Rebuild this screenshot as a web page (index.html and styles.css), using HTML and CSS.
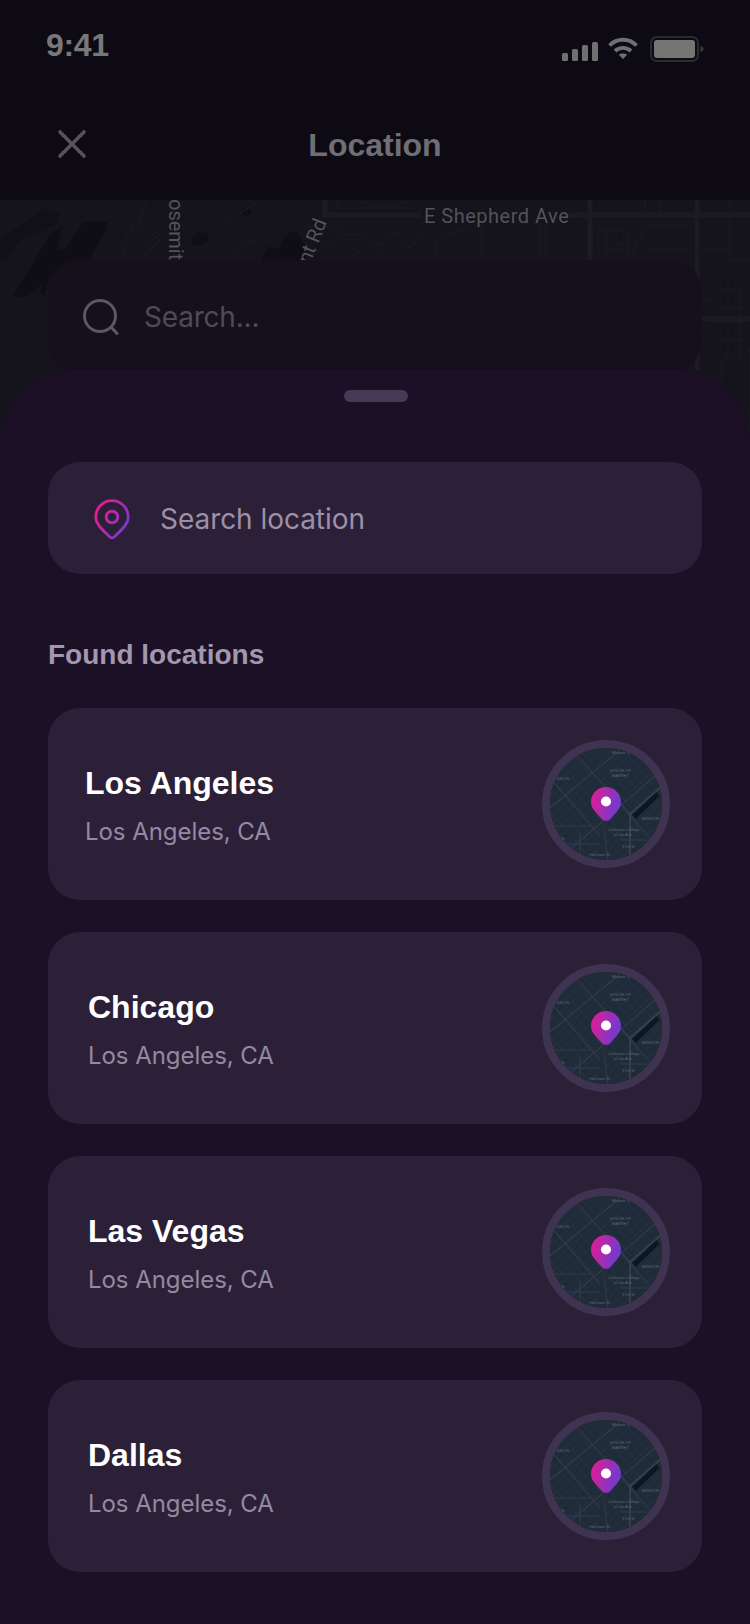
FILE: index.html
```html
<!DOCTYPE html>
<html lang="en">
<head>
<meta charset="utf-8">
<title>Location</title>
<link rel="stylesheet" href="styles.css">
</head>
<body>
<svg class="defs" width="0" height="0" aria-hidden="true">
  <defs>
    <linearGradient id="brand" x1="0" y1="0" x2="1" y2="0.35">
      <stop offset="0" stop-color="#ec1a8c"/>
      <stop offset="1" stop-color="#6f3bd0"/>
    </linearGradient>
    <linearGradient id="brand-line" gradientUnits="userSpaceOnUse" x1="2" y1="8" x2="34" y2="24">
      <stop offset="0" stop-color="#ec1a8c"/>
      <stop offset="1" stop-color="#7c38cc"/>
    </linearGradient>
    <pattern id="grid" width="8" height="7" patternUnits="userSpaceOnUse" patternTransform="rotate(-42 56 56)">
      <path d="M0 0H8M0 0V7" fill="none" stroke="#2a3745" stroke-width="0.700"/>
    </pattern>
    <symbol id="thumb" viewBox="0 0 112 112">
      <rect width="112" height="112" fill="#1f2b39"/>
      <rect width="112" height="112" fill="url(#grid)"/>
      <path d="M0 28L44 -6M-2 62L70 2M8 112L112 22M20 0L84 70M0 30L50 88M56 40L100 90" fill="none" stroke="#303d4b" stroke-width="1.100"/>
      <path d="M80 112V66L112 38" fill="none" stroke="#3a4652" stroke-width="1.600"/>
      <path d="M84 69L108 46" fill="none" stroke="#0d1720" stroke-width="5"/>
      <path d="M30 84V112M54 80L58 112M70 92H112M0 78H40M12 96H50" fill="none" stroke="#303d4b" stroke-width="1"/>
      <g class="thumb-label">
        <text x="60" y="24">SOUTH OF</text>
        <text x="62" y="29">MARKET</text>
        <text x="58" y="83">California College</text>
        <text x="64" y="88">of the Arts</text>
        <text x="62" y="6">Mission St</text>
        <text x="92" y="72">MISSION</text>
        <text x="2" y="32">MISSION</text>
        <text x="72" y="100">17th St</text>
        <text x="40" y="108">Harrison St</text>
        <text x="2" y="92">15th St</text>
      </g>
    </symbol>
    <symbol id="pin" viewBox="0 0 30 34">
      <path d="M15 0C6.7 0 0 6.7 0 15c0 6.2 5 10.800 11 17.300 2.200 2.200 5.800 2.200 8 0C25 25.800 30 21.200 30 15 30 6.700 23.300 0 15 0z" fill="url(#brand)"/>
      <circle cx="15" cy="14.500" r="5" fill="#fff"/>
    </symbol>
  </defs>
</svg>

<header class="top">
  <div class="status">
    <span class="time">9:41</span>
    <div class="status-icons">
      <svg class="signal" width="36" height="20" viewBox="0 0 36 20">
        <rect x="0" y="11" width="6" height="8" rx="1.500"/>
        <rect x="10" y="7" width="6" height="12" rx="1.500"/>
        <rect x="20" y="3" width="6" height="16" rx="1.500"/>
        <rect x="30" y="0" width="6" height="19" rx="1.500"/>
      </svg>
      <svg class="wifi" width="30" height="22" viewBox="0 0 30 22">
        <path d="M1.500 8.500C9 .8 21 .8 28.500 8.500" fill="none" stroke-width="3.800"/>
        <path d="M7 14C11.500 9.800 18.500 9.800 23 14" fill="none" stroke-width="3.800"/>
        <path d="M10.800 17.800C13 16 17 16 19.200 17.800L15 22z" class="wifi-dot"/>
      </svg>
      <svg class="battery" width="54" height="26" viewBox="0 0 54 26">
        <rect x="1" y="1" width="47" height="24" rx="5.500" fill="none" stroke="#2b2a30" stroke-width="2"/>
        <rect x="4" y="4" width="41" height="18" rx="3" fill="#747674"/>
        <path d="M50.500 10c2 .5 3 1.500 3 3s-1 2.500-3 3z" fill="#3a393f"/>
      </svg>
    </div>
  </div>
  <nav class="nav">
    <button class="close" type="button" aria-label="Close">
      <svg width="30" height="30" viewBox="0 0 30 30"><path d="M3 3L27 27M27 3L3 27" fill="none" stroke="#55525c" stroke-width="3.600" stroke-linecap="round"/></svg>
    </button>
    <h1 class="title">Location</h1>
    <span class="nav-spacer"></span>
  </nav>
</header>

<section class="map">
  <svg class="map-art" width="750" height="250" viewBox="0 0 750 250">
    <rect width="750" height="250" fill="#15131b"/>
    <g fill="#100e15">
      <path d="M83 22H108L106 32L88 60L60 65L48 80L45 97L40 93L43 83L27 97L12 97L20 85L50 35L63 25L57 50L65 50Z"/>
      <ellipse cx="200" cy="39" rx="9" ry="6" transform="rotate(-25 200 39)"/>
      <ellipse cx="246" cy="12" rx="5" ry="4"/>
      <path d="M262 60L268 46L278 50L284 36L296 30L304 44L306 60Z"/>
    </g>
    <path d="M0 40L45 8L60 15L55 25L20 40L8 60L0 58Z" fill="#121017"/>
    <g class="thin">
      <path d="M126 58C122 44 128 32 136 22M140 58L160 40L138 24L146 0M165 30L140 50"/>
      <path d="M230 60C232 50 240 44 256 40M258 0C250 10 232 14 222 28"/>
      <path d="M310 56L340 36C360 30 372 42 380 46L396 32L410 48L430 28M345 60L370 46L395 60M300 30C310 20 330 28 345 30"/>
      <path d="M338 0V8H420M360 0C370 8 400 8 410 0"/>
      <path d="M436 60V40L470 26H482V58M482 40H558M510 24H540V60M546 26V60M566 60H600"/>
      <path d="M598 30H624V50H598ZM606 30V60M612 44H624M630 60L638 40L648 26H690V60M648 40H688M648 50H688M628 60V30M660 0V14M645 0V14M697 50H730V60H750M730 0V60H750M697 16V60"/>
      <path d="M716 90H740V160H728M728 80V160M716 108H744M716 122H744M716 140H744M702 100H716M702 230H750V150L740 160H722V180H702M702 210H750M740 160V135"/>
    </g>
    <g class="roads">
      <path d="M325 0V15H421M569 15H750"/>
      <path d="M590 0V60M697 0V170M702 119H750"/>
    </g>
    <g class="map-label">
      <text x="424" y="23" class="street">E Shepherd Ave</text>
      <text transform="translate(169 -1) rotate(90)">osemit</text>
      <text transform="translate(327 22) rotate(-68)" text-anchor="end">nt Rd</text>
    </g>
  </svg>
  <div class="map-search">
    <svg width="36" height="36" viewBox="0 0 36 36"><circle cx="17" cy="17" r="15.500" fill="none" stroke="#5a5862" stroke-width="3"/><path d="M28 28L34 34.500" fill="none" stroke="#5a5862" stroke-width="3" stroke-linecap="round"/></svg>
    <span class="map-search-text">Search...</span>
  </div>
</section>

<main class="sheet">
  <div class="handle"></div>
  <div class="field">
    <svg width="36" height="41" viewBox="0 0 36 41">
      <path d="M18 1.700C9 1.700 1.700 9 1.700 18c0 6.800 6 12 13.800 19.800 1.400 1.400 3.600 1.400 5 0C28.300 30 34.300 24.800 34.300 18 34.300 9 27 1.700 18 1.700z" fill="none" stroke="url(#brand-line)" stroke-width="2.800"/>
      <circle cx="18" cy="18" r="5.800" fill="none" stroke="url(#brand-line)" stroke-width="3"/>
    </svg>
    <span class="field-text">Search location</span>
  </div>
  <h2 class="section-title">Found locations</h2>
  <ul class="list">
    <li class="card card-first">
      <div class="card-text"><span class="city">Los Angeles</span><span class="region">Los Angeles, CA</span></div>
      <div class="thumb"><svg class="thumb-map" width="112" height="112"><use href="#thumb"/></svg><svg class="thumb-pin" width="30" height="34"><use href="#pin"/></svg></div>
    </li>
    <li class="card">
      <div class="card-text"><span class="city">Chicago</span><span class="region">Los Angeles, CA</span></div>
      <div class="thumb"><svg class="thumb-map" width="112" height="112"><use href="#thumb"/></svg><svg class="thumb-pin" width="30" height="34"><use href="#pin"/></svg></div>
    </li>
    <li class="card">
      <div class="card-text"><span class="city">Las Vegas</span><span class="region">Los Angeles, CA</span></div>
      <div class="thumb"><svg class="thumb-map" width="112" height="112"><use href="#thumb"/></svg><svg class="thumb-pin" width="30" height="34"><use href="#pin"/></svg></div>
    </li>
    <li class="card">
      <div class="card-text"><span class="city">Dallas</span><span class="region">Los Angeles, CA</span></div>
      <div class="thumb"><svg class="thumb-map" width="112" height="112"><use href="#thumb"/></svg><svg class="thumb-pin" width="30" height="34"><use href="#pin"/></svg></div>
    </li>
  </ul>
</main>
</body>
</html>
```
FILE: styles.css
```css
* { box-sizing: border-box; }
html, body { margin: 0; padding: 0; }
body {
  width: 750px;
  height: 1624px;
  overflow: hidden;
  background: #1c1026;
  font-family: "Liberation Sans", Arial, sans-serif;
}
.defs { position: absolute; }

.top { height: 200px; background: #0d0a14; display: flex; flex-direction: column; }
.status {
  height: 88px;
  padding: 27px 46px 0 46px;
  display: flex;
  justify-content: space-between;
  align-items: flex-start;
}
.time { font-size: 32px; line-height: 36px; font-weight: 700; color: #787878; letter-spacing: -0.3px; }
.status-icons { display: flex; align-items: flex-start; gap: 10px; padding-top: 9px; }
.signal { margin-top: 6px; fill: #707070; }
.wifi { margin-top: 1px; margin-right: 2px; stroke: #707070; }
.wifi-dot { fill: #707070; stroke: none; }

.nav {
  height: 112px;
  padding: 0 48px;
  display: grid;
  grid-template-columns: 48px 1fr 48px;
  align-items: center;
}
.close { width: 48px; height: 48px; padding: 0 0 0 9px; border: 0; background: none; display: flex; align-items: center; }
.title { margin: 2px 0 0; text-align: center; font-size: 32px; line-height: 40px; font-weight: 700; color: #6f6e75; }

.map { position: relative; height: 250px; padding: 60px 48px 0; overflow: hidden; }
.map-art { position: absolute; left: 0; top: 0; }
.thin { fill: none; stroke: #1a1820; stroke-width: 1.500; }
.roads { fill: none; stroke: #1c1a22; stroke-width: 5; }
.map-label text { font-family: Roboto, sans-serif; font-size: 20px; fill: #54525a; }
.map-label .street { letter-spacing: 0.5px; }
.map-search {
  position: relative;
  height: 112px;
  border-radius: 32px;
  background: #15101b;
  padding: 2px 0 0 35px;
  display: flex;
  align-items: center;
  gap: 25px;
}
.map-search-text { font-family: Inter, sans-serif; font-size: 28px; color: #4e4b55; letter-spacing: -0.2px; }

.sheet {
  position: relative;
  margin-top: -80px;
  height: 1254px;
  padding: 20px 48px 0;
  background: #1c1026;
  border-radius: 72px 72px 0 0;
}
.handle { width: 64px; height: 12px; margin-left: 296px; border-radius: 6px; background: #453a55; }
.field {
  height: 112px;
  margin-top: 60px;
  border-radius: 32px;
  background: #2c2038;
  padding: 2px 0 0 46px;
  display: flex;
  align-items: center;
  gap: 30px;
}
.field-text { font-family: Inter, sans-serif; font-size: 28px; color: #9c90a8; letter-spacing: -0.05px; }
.section-title { margin: 65px 0 37px; font-size: 28px; line-height: 32px; font-weight: 700; color: #a297ae; }
.list { list-style: none; margin: 0; padding: 0; display: flex; flex-direction: column; gap: 32px; }
.card {
  height: 192px;
  border-radius: 32px;
  background: #2c2038;
  padding: 0 32px 0 40px;
  display: flex;
  align-items: center;
  justify-content: space-between;
}
.card-first { padding-left: 37px; }
.card-text { display: flex; flex-direction: column; gap: 15px; margin-top: 3px; }
.city { font-size: 32px; line-height: 38px; font-weight: 700; color: #fff; }
.region { font-family: Inter, sans-serif; font-size: 24px; line-height: 30px; color: #9589a2; letter-spacing: -0.05px; }
.thumb {
  position: relative;
  width: 128px;
  height: 128px;
  border: 8px solid #3e3350;
  border-radius: 50%;
  overflow: hidden;
}
.thumb-map { display: block; }
.thumb-pin { position: absolute; left: 41px; top: 39px; }
.thumb-label text { font-family: "Liberation Sans", sans-serif; font-size: 4px; fill: #5c6875; }
```
